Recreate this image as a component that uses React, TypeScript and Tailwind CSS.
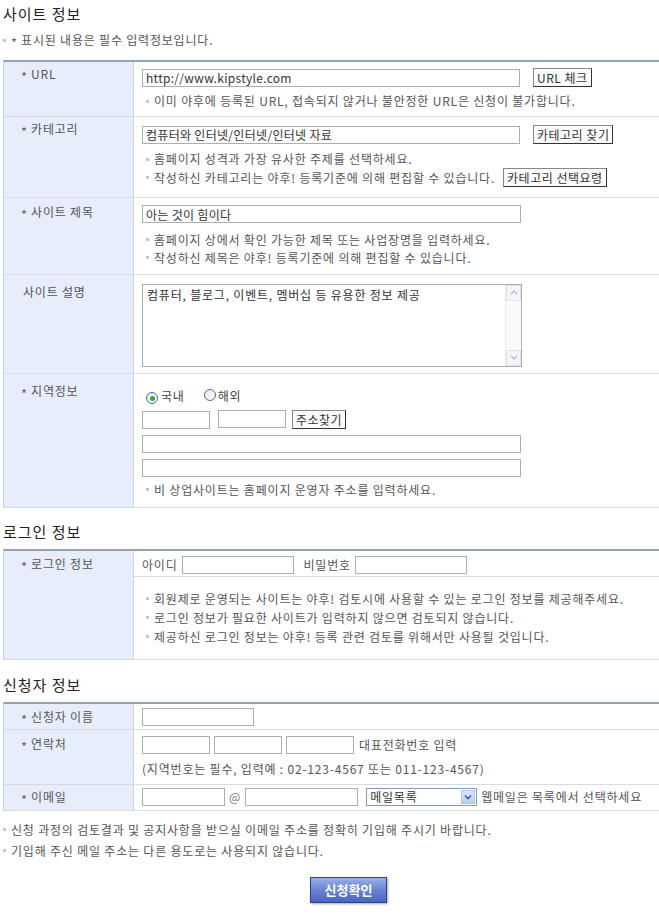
import React from "react";

function Bullet() {
	return <span className="inline-block w-[3px] h-[3px] bg-[#c8c8c8] mr-[5px] shrink-0" />;
}

function Star() {
	return <span className="relative top-[3px] mr-[4px] text-[13px] leading-[12px] text-[#666] tracking-normal">*</span>;
}

function Note({ children }: { children: React.ReactNode }) {
	return (
		<div className="flex items-center leading-[18px] whitespace-nowrap">
			<span className="w-[4px]" />
			<Bullet />
			{children}
		</div>
	);
}

function Field({ w, value }: { w: string; value?: string }) {
	return (
		<input
			readOnly
			defaultValue={value}
			className={`${w} h-[18px] border border-[#a9afb5] bg-white px-[3px] text-[12px] leading-[16px] text-[#333] tracking-[0.3px] outline-none`}
		/>
	);
}

function Btn({ children }: { children: React.ReactNode }) {
	return (
		<span className="inline-flex items-center h-[19px] px-[3px] border border-[#888] border-r-[#333] border-b-[#333] bg-[#fbfbfb] text-[12px] leading-[17px] text-[#333] tracking-[0.5px] whitespace-nowrap">
			{children}
		</span>
	);
}

function Label({ children, star = true, pt = "pt-[3px]" }: { children: React.ReactNode; star?: boolean; pt?: string }) {
	return (
		<div className={`bg-[#e8edfc] border-r border-[#c9d2e2] pl-[17px] ${pt} leading-[18px] text-[#555]`}>
			{star ? <Star /> : <span className="ml-[2px]" />}
			{children}
		</div>
	);
}

function Radio({ checked }: { checked?: boolean }) {
	return (
		<span className="inline-flex items-center justify-center w-[12px] h-[12px] rounded-full border border-[#4b6d95] bg-gradient-to-br from-[#e4e8ee] to-white">
			{checked && <span className="w-[5px] h-[5px] rounded-full bg-[#3aa63a]" />}
		</span>
	);
}

function Heading({ children, mt }: { children: React.ReactNode; mt: string }) {
	return <div className={`${mt} text-[15px] leading-[20px] text-[#222] tracking-[1px]`}>{children}</div>;
}

export default function App() {
	const row = "grid grid-cols-[130px_1fr] border-b border-[#d6dbe1]";
	return (
		<div className="w-[659px] min-h-[918px] bg-white pl-[3px] text-[12px] text-[#555] tracking-[0.8px] font-['Noto_Sans_CJK_KR',sans-serif] overflow-hidden">
			<Heading mt="pt-[4px]">사이트 정보</Heading>
			<div className="mt-[7px] flex items-center leading-[18px]">
				<Bullet />
				<Star />표시된 내용은 필수 입력정보입니다.
			</div>

			{/* site info */}
			<div className="mt-[11px] border-t-2 border-t-[#95a3b1] border-l border-l-[#c9d2e2]">
				<div className={row}>
					<Label>URL</Label>
					<div className="pl-[8px] pt-[6px] pb-[6px]">
						<div className="flex items-center h-[19px]">
							<Field w="w-[378px]" value="http://www.kipstyle.com" />
							<span className="ml-[13px]">
								<Btn>URL 체크</Btn>
							</span>
						</div>
						<div className="mt-[5px]">
							<Note>이미 야후에 등록된 URL, 접속되지 않거나 불안정한 URL은 신청이 불가합니다.</Note>
						</div>
					</div>
				</div>

				<div className={row}>
					<Label>카테고리</Label>
					<div className="pl-[8px] pt-[8px] pb-[10px]">
						<div className="flex items-center h-[19px]">
							<Field w="w-[378px]" value="컴퓨터와 인터넷/인터넷/인터넷 자료" />
							<span className="ml-[13px]">
								<Btn>카테고리 찾기</Btn>
							</span>
						</div>
						<div className="mt-[6px]">
							<Note>홈페이지 성격과 가장 유사한 주제를 선택하세요.</Note>
							<Note>
								작성하신 카테고리는 야후! 등록기준에 의해 편집할 수 있습니다.
								<span className="ml-[8px]">
									<Btn>카테고리 선택요령</Btn>
								</span>
							</Note>
						</div>
					</div>
				</div>

				<div className={row}>
					<Label pt="pt-[5px]">사이트 제목</Label>
					<div className="pl-[8px] pt-[7px] pb-[7px]">
						<Field w="w-[379px]" value="아는 것이 힘이다" />
						<div className="mt-[7px]">
							<Note>홈페이지 상에서 확인 가능한 제목 또는 사업장명을 입력하세요.</Note>
							<Note>작성하신 제목은 야후! 등록기준에 의해 편집할 수 있습니다.</Note>
						</div>
					</div>
				</div>

				<div className={row}>
					<Label star={false} pt="pt-[8px]">사이트 설명</Label>
					<div className="pl-[8px] pt-[9px] pb-[6px]">
						<div className="relative w-[380px] h-[83px] border border-[#a9afb5] bg-white">
							<div className="pl-[4px] pt-[1px] leading-[18px] text-[#333]">컴퓨터, 블로그, 이벤트, 멤버십 등 유용한 정보 제공</div>
							<div className="absolute right-0 top-0 bottom-0 w-[16px] bg-[#fafafa] border-l border-[#ededed] flex flex-col justify-between">
								<span className="h-[16px] border border-[#dde3ea] bg-[#f3f5f8] flex items-center justify-center">
									<svg width="8" height="5" viewBox="0 0 8 5">
										<polyline points="1,4 4,1 7,4" fill="none" stroke="#b8c2cf" strokeWidth="1.5" />
									</svg>
								</span>
								<span className="h-[16px] border border-[#dde3ea] bg-[#f3f5f8] flex items-center justify-center">
									<svg width="8" height="5" viewBox="0 0 8 5">
										<polyline points="1,1 4,4 7,1" fill="none" stroke="#b8c2cf" strokeWidth="1.5" />
									</svg>
								</span>
							</div>
						</div>
					</div>
				</div>

				<div className={row}>
					<Label pt="pt-[8px]">지역정보</Label>
					<div className="pl-[8px] pt-[13px] pb-[8px]">
						<div className="flex items-center leading-[18px] text-[#444]">
							<span className="ml-[4px]"><Radio checked /></span>
							<span className="ml-[3px]">국내</span>
							<span className="ml-[19px]"><Radio /></span>
							<span className="ml-[2px]">해외</span>
						</div>
						<div className="mt-[6px] flex items-center h-[18px]">
							<Field w="w-[68px]" />
							<span className="ml-[8px]"><Field w="w-[68px]" /></span>
							<span className="ml-[6px]"><Btn>주소찾기</Btn></span>
						</div>
						<div className="mt-[6px]"><Field w="w-[379px]" /></div>
						<div className="mt-[6px]"><Field w="w-[379px]" /></div>
						<div className="mt-[3px]">
							<Note>비 상업사이트는 홈페이지 운영자 주소를 입력하세요.</Note>
						</div>
					</div>
				</div>
			</div>

			<Heading mt="mt-[14px]">로그인 정보</Heading>
			<div className="mt-[7px] border-t-2 border-t-[#95a3b1] border-l border-l-[#c9d2e2]">
				<div className={row}>
					<Label pt="pt-[4px]">로그인 정보</Label>
					<div>
						<div className="pl-[8px] pt-[5px] pb-[2px] border-b border-[#d6dbe1] flex items-center">
							<span className="mr-[4px] text-[#555]">아이디</span>
							<Field w="w-[112px]" />
							<span className="ml-[10px] mr-[4px]">비밀번호</span>
							<Field w="w-[112px]" />
						</div>
						<div className="pl-[8px] pt-[12px] pb-[13px] [&>div]:leading-[19px]">
							<Note>회원제로 운영되는 사이트는 야후! 검토시에 사용할 수 있는 로그인 정보를 제공해주세요.</Note>
							<Note>로그인 정보가 필요한 사이트가 입력하지 않으면 검토되지 않습니다.</Note>
							<Note>제공하신 로그인 정보는 야후! 등록 관련 검토를 위해서만 사용될 것입니다.</Note>
						</div>
					</div>
				</div>
			</div>

			<Heading mt="mt-[15px]">신청자 정보</Heading>
			<div className="mt-[7px] border-t-2 border-t-[#95a3b1] border-l border-l-[#c9d2e2]">
				<div className={row}>
					<Label pt="pt-[4px]">신청자 이름</Label>
					<div className="pl-[8px] pt-[4px] pb-[3px]">
						<Field w="w-[112px]" />
					</div>
				</div>
				<div className={row}>
					<Label pt="pt-[5px]">연락처</Label>
					<div className="pl-[8px] pt-[6px] pb-[6px]">
						<div className="flex items-center gap-[4px]">
							<Field w="w-[68px]" />
							<Field w="w-[68px]" />
							<Field w="w-[68px]" />
							<span className="ml-[1px] text-[#555]">대표전화번호 입력</span>
						</div>
						<div className="mt-[6px] leading-[18px]">(지역번호는 필수, 입력예 : 02-123-4567 또는 011-123-4567)</div>
					</div>
				</div>
				<div className={row}>
					<Label pt="pt-[3px]">이메일</Label>
					<div className="pl-[8px] pt-[3px] pb-[4px] flex items-center whitespace-nowrap">
						<Field w="w-[83px]" />
						<span className="mx-[4px] text-[#777]">@</span>
						<Field w="w-[113px]" />
						<span className="ml-[8px] relative w-[111px] h-[18px] border border-[#7f9db9] bg-white flex items-center">
							<span className="pl-[3px] leading-[16px] text-[#333]">메일목록</span>
							<span className="absolute right-[1px] top-[1px] w-[14px] h-[14px] bg-gradient-to-b from-[#dce7fb] to-[#b7cdf5] border border-[#b3c6ea] flex items-center justify-center">
								<svg width="8" height="6" viewBox="0 0 8 6">
									<polyline points="1,1.5 4,4.5 7,1.5" fill="none" stroke="#4d6185" strokeWidth="1.6" />
								</svg>
							</span>
						</span>
						<span className="ml-[4px] text-[#555]">웹메일은 목록에서 선택하세요</span>
					</div>
				</div>
			</div>

			<div className="mt-[8px] [&>div]:leading-[21px]">
				<div className="flex items-center"><Bullet />신청 과정의 검토결과 및 공지사항을 받으실 이메일 주소를 정확히 기입해 주시기 바랍니다.</div>
				<div className="flex items-center"><Bullet />기입해 주신 메일 주소는 다른 용도로는 사용되지 않습니다.</div>
			</div>

			<div className="mt-[16px] ml-[307px] w-[77px] h-[26px] border border-[#2f4386] bg-gradient-to-b from-[#9aaee8] via-[#6b83d4] to-[#4c64bf] shadow-[1px_1px_2px_rgba(0,0,0,0.35)] flex items-center justify-center text-white text-[13px] font-bold tracking-normal">
				신청확인
			</div>
		</div>
	);
}
